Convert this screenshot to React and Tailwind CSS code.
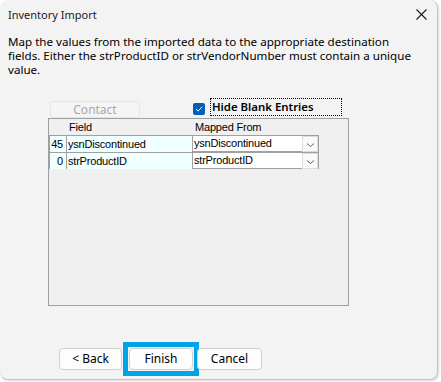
import React from 'react';

const ui = { fontFamily: '"Noto Sans", "Open Sans", sans-serif' };
const grid = { fontFamily: '"Liberation Sans", Arial, sans-serif' };

function Chevron() {
  return (
    <svg width="9" height="6" viewBox="0 0 9 6" fill="none">
      <path d="M1 1.5 L4.5 4.5 L8 1.5" stroke="#606060" strokeWidth="1" />
    </svg>
  );
}

export default function App() {
  const rows = [
    { n: '45', field: 'ysnDiscontinued', mapped: 'ysnDiscontinued' },
    { n: '0', field: 'strProductID', mapped: 'strProductID' }
  ];

  const lines = [
    'Map the values from the imported data to the appropriate destination',
    'fields. Either the strProductID or strVendorNumber must contain a unique',
    'value.'
  ];

  return (
    <div className="w-[441px] h-[382px] bg-white" style={ui}>
      <div className="flex h-[380px] w-[438px] flex-col rounded-lg border-r border-b border-[#c4c4c4] bg-[#f3f3f3] text-black shadow-[1px_1px_2px_rgba(0,0,0,0.15)]">
        {/* title bar */}
        <div className="flex h-[29px] items-center justify-between pl-[8px] pr-[10px]">
          <span className="text-[11px] leading-[14px] text-[#1a1a1a]">Inventory Import</span>
          <svg width="11" height="11" viewBox="0 0 11 11">
            <path d="M0.5 0.5 L10.5 10.5 M10.5 0.5 L0.5 10.5" stroke="#1a1a1a" strokeWidth="1.1" />
          </svg>
        </div>

        <div className="px-[8px] pt-[6px] text-[11.6px]">
          {lines.map((l) => (
            <div key={l} className="h-[14px] leading-[14px] whitespace-nowrap">{l}</div>
          ))}
        </div>

        <div className="ml-[48px] mt-[21px] w-[301px]">
          <div className="flex h-[20px] items-start">
            <div className="ml-[2px] mt-[3px] flex h-[17px] w-[90px] items-center justify-center rounded-[3px] border border-[#e6e6e6] bg-[#f5f5f5] text-[12px] text-[#a8a8a8]">
              Contact
            </div>
            <div className="ml-[53px] mt-[5px] flex h-[12px] w-[12px] items-center justify-center rounded-[2px] bg-[#005fb8]">
              <svg width="8" height="6" viewBox="0 0 9 7" fill="none">
                <path d="M1 3.5 L3.5 6 L8 1" stroke="white" strokeWidth="1.1" />
              </svg>
            </div>
            <div className="ml-[5px] flex h-[18px] w-[132px] items-center border border-dotted border-black pl-[1px] text-[11.4px] font-semibold">
              Hide Blank Entries
            </div>
          </div>

          {/* grid */}
          <div className="h-[188px] border border-[#a0a0a0] bg-[#f0f0f0] text-[11px] tracking-[-0.2px]" style={grid}>
            <div className="flex h-[16px] items-center">
              <span className="ml-[20px] w-[126px]">Field</span>
              <span>Mapped From</span>
            </div>
            {rows.map((r) => (
              <div key={r.n} className="flex h-[17px] w-[270px] border-t border-[#a0a0a0]">
                <div className="flex w-[18px] items-center justify-end border-l border-r border-[#a0a0a0] bg-[#f0ffff] pr-[3px]">
                  {r.n}
                </div>
                <div className="flex w-[126px] items-center border-r border-[#a0a0a0] bg-[#f0ffff] pl-[1px]">
                  {r.field}
                </div>
                <div className="flex w-[126px] items-center border-r border-b border-[#a0a0a0] bg-white pl-[1px]">
                  <span className="flex-1">{r.mapped}</span>
                  <span className="flex h-[16px] w-[16px] items-end justify-center border border-[#dcdcdc] bg-[#fafafa] pb-[3px]">
                    <Chevron />
                  </span>
                </div>
              </div>
            ))}
          </div>
        </div>

        <div className="flex-1" />

        {/* buttons */}
        <div className="mb-[9px] flex h-[22px] items-center pl-[59px] text-[12px]">
          <button className="h-[22px] w-[63px] rounded-[4px] border border-[#d0d0d0] bg-[#fdfdfd]">
            &lt; Back
          </button>
          <div className="-my-[6px] ml-[1px] border-[5px] border-[#00a2e8] p-[1px]">
            <button className="block h-[22px] w-[64px] rounded-[4px] border border-[#d0d0d0] bg-[#fdfdfd]">
              Finish
            </button>
          </div>
          <button className="-ml-[2px] h-[22px] w-[65px] rounded-[4px] border border-[#d0d0d0] bg-[#fdfdfd]">
            Cancel
          </button>
        </div>
      </div>
    </div>
  );
}
